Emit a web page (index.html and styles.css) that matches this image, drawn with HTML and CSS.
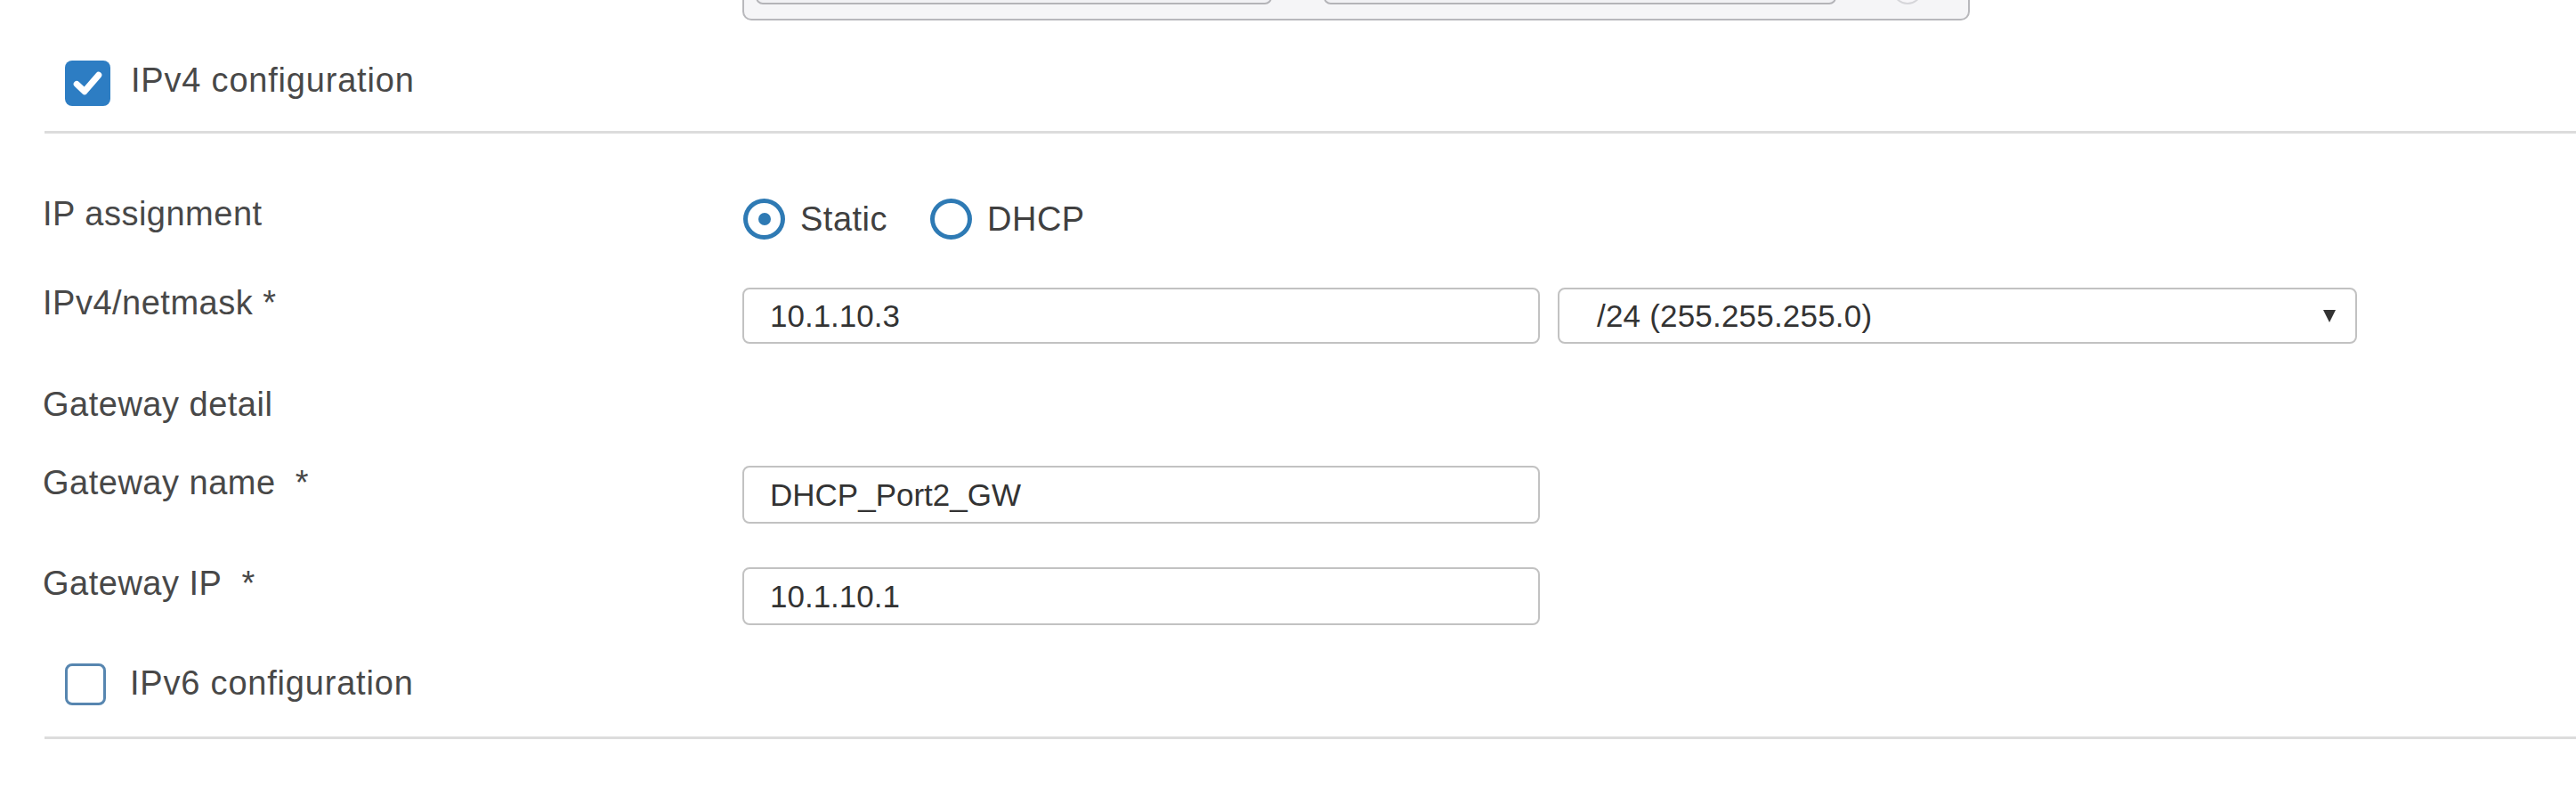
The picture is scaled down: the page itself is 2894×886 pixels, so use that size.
FILE: index.html
```html
<!DOCTYPE html>
<html lang="en">
<head>
<meta charset="utf-8">
<title>Interface settings</title>
<link rel="stylesheet" href="styles.css">
</head>
<body>
<div class="page">
  <div class="prev-box">
    <div class="prev-field"></div>
    <div class="prev-field prev-field-wide"></div>
    <div class="prev-remove"></div>
  </div>

  <div class="section-toggle">
    <span class="checkbox checkbox-on">
      <svg viewBox="0 0 50 50" width="50" height="50" aria-hidden="true"><path d="M13 26 L21.5 34 L37 16" fill="none" stroke="#ffffff" stroke-width="7" stroke-linecap="round" stroke-linejoin="round"/></svg>
    </span>
    <span class="toggle-text">IPv4 configuration</span>
  </div>
  <div class="divider divider-first"></div>

  <div class="form">
    <div class="row row-assign">
      <div class="label">IP assignment</div>
      <div class="radios">
        <div class="radio-item">
          <span class="radio radio-on"><span class="radio-dot"></span></span>
          <span class="radio-text">Static</span>
        </div>
        <div class="radio-item">
          <span class="radio"></span>
          <span class="radio-text">DHCP</span>
        </div>
      </div>
    </div>

    <div class="row row-netmask">
      <div class="label">IPv4/netmask *</div>
      <div class="controls">
        <input class="field field-ip" type="text" value="10.1.10.3" readonly>
        <div class="field select">
          <span class="select-text">/24 (255.255.255.0)</span>
          <svg class="select-arrow" viewBox="0 0 14 16" width="14" height="16" aria-hidden="true"><polygon points="0,1 14,1 7,15" fill="#333333"/></svg>
        </div>
      </div>
    </div>

    <div class="row row-detail">
      <div class="label">Gateway detail</div>
    </div>

    <div class="row row-gwname">
      <div class="label">Gateway name&nbsp; *</div>
      <div class="controls">
        <input class="field field-ip field-tall" type="text" value="DHCP_Port2_GW" readonly>
      </div>
    </div>

    <div class="row row-gwip">
      <div class="label">Gateway IP&nbsp; *</div>
      <div class="controls">
        <input class="field field-ip field-tall" type="text" value="10.1.10.1" readonly>
      </div>
    </div>
  </div>

  <div class="section-toggle section-toggle-v6">
    <span class="checkbox checkbox-off"></span>
    <span class="toggle-text">IPv6 configuration</span>
  </div>
  <div class="divider divider-last"></div>
</div>
</body>
</html>
```

FILE: styles.css
```css
* {
  box-sizing: border-box;
}

html, body {
  margin: 0;
  padding: 0;
  background: #ffffff;
}

body {
  font-family: "Liberation Sans", Arial, sans-serif;
  color: #484848;
  overflow: hidden;
}

.page {
  width: 2894px;
  height: 886px;
  padding-left: 48px;
}

/* partially visible box from the previous section */
.prev-box {
  margin-left: 786px;
  margin-top: -40px;
  width: 1379px;
  height: 63px;
  border: 2px solid #b8b8bc;
  border-radius: 10px;
  background: #f5f5f7;
  display: flex;
  align-items: flex-end;
  padding: 0 0 16px 13px;
}

.prev-field {
  width: 580px;
  height: 40px;
  border: 2px solid #b4b4b8;
  border-radius: 8px;
  background: #f1f1f4;
}

.prev-field-wide {
  width: 576px;
  margin-left: 58px;
}

.prev-remove {
  width: 34px;
  height: 34px;
  border: 2px solid #d6d6da;
  border-radius: 50%;
  margin-left: 63px;
  margin-bottom: 0;
  background: #f7f6f9;
}

/* section toggles */
.section-toggle {
  display: flex;
  align-items: flex-start;
  gap: 23px;
  margin-left: 25px;
  margin-top: 45px;
  height: 52px;
}

.section-toggle-v6 {
  margin-top: 43px;
  height: 47px;
  gap: 27px;
}

.checkbox {
  display: block;
  flex: none;
  border-radius: 8px;
}

.checkbox-on {
  width: 51px;
  height: 51px;
  background: #2d7dc3;
}

.checkbox-on svg {
  display: block;
  width: 51px;
  height: 51px;
}

.checkbox-off {
  width: 46px;
  height: 47px;
  border: 3px solid #5786b0;
  background: #ffffff;
}

.toggle-text {
  font-size: 38px;
  line-height: 44px;
  letter-spacing: 0.8px;
  color: #484848;
}

.divider {
  height: 3px;
  background: #dcdcdc;
  margin-left: 2px;
}

.divider-first {
  margin-top: 27px;
}

.divider-last {
  margin-top: 35px;
}

/* form rows */
.form {
  display: flex;
  flex-direction: column;
}

.row {
  display: grid;
  grid-template-columns: 786px 1fr;
  align-items: start;
}

.label {
  font-size: 38px;
  line-height: 44px;
  letter-spacing: 0.5px;
  color: #484848;
  white-space: nowrap;
}

.row-assign {
  margin-top: 68px;
}

.row-netmask {
  margin-top: 49px;
}

.row-detail {
  margin-top: 46px;
}

.row-gwname {
  margin-top: 44px;
}

.row-gwip {
  margin-top: 45px;
}

.radios {
  display: flex;
  align-items: center;
  gap: 48px;
  padding-top: 5px;
  padding-left: 1px;
}

.radio-item {
  display: flex;
  align-items: center;
  gap: 17px;
}

.radio {
  width: 47px;
  height: 46px;
  border: 5px solid #2e7ab4;
  border-radius: 50%;
  display: flex;
  align-items: center;
  justify-content: center;
  background: #ffffff;
}

.radio-dot {
  width: 14px;
  height: 14px;
  border-radius: 50%;
  background: #2e7ab4;
}

.radio-text {
  font-size: 38px;
  line-height: 44px;
  letter-spacing: 0.5px;
  color: #404040;
}

.controls {
  display: flex;
  gap: 20px;
  padding-top: 5px;
}

.row-gwname .controls {
  padding-top: 3px;
}

.row-gwip .controls {
  padding-top: 4px;
}

.field {
  height: 63px;
  border: 2px solid #c2c2c2;
  border-radius: 8px;
  background: #ffffff;
  font-family: "Liberation Sans", Arial, sans-serif;
  font-size: 35px;
  color: #333333;
  margin: 0;
  outline: none;
}

.field-ip {
  width: 896px;
  padding: 0 0 0 29px;
}

.field-tall {
  height: 65px;
}

.select {
  width: 898px;
  display: flex;
  align-items: center;
  justify-content: space-between;
  padding: 0 22px 0 42px;
}

.select-text {
  letter-spacing: 0.2px;
}

.select-arrow {
  display: block;
  flex: none;
}
```
